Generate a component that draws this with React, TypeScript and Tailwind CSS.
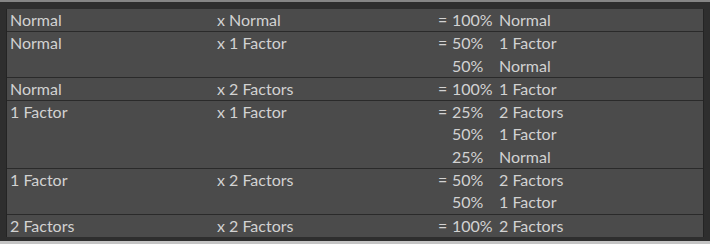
type Line = { eq?: boolean; pct: string; res: string };

type Row = { a: string; b: string; lines: Line[] };

const rows: Row[] = [
  { a: "Normal", b: "x Normal", lines: [{ eq: true, pct: "100%", res: "Normal" }] },
  {
    a: "Normal",
    b: "x 1 Factor",
    lines: [
      { eq: true, pct: "50%", res: "1 Factor" },
      { pct: "50%", res: "Normal" },
    ],
  },
  { a: "Normal", b: "x 2 Factors", lines: [{ eq: true, pct: "100%", res: "1 Factor" }] },
  {
    a: "1 Factor",
    b: "x 1 Factor",
    lines: [
      { eq: true, pct: "25%", res: "2 Factors" },
      { pct: "50%", res: "1 Factor" },
      { pct: "25%", res: "Normal" },
    ],
  },
  {
    a: "1 Factor",
    b: "x 2 Factors",
    lines: [
      { eq: true, pct: "50%", res: "2 Factors" },
      { pct: "50%", res: "1 Factor" },
    ],
  },
  { a: "2 Factors", b: "x 2 Factors", lines: [{ eq: true, pct: "100%", res: "2 Factors" }] },
];

export default function App() {
  return (
    <div className="w-[710px] h-[244px] bg-[#2e2e2e] border-t-2 border-b-[3px] border-t-[#858585] border-b-[#c4c4c4] px-[6px] pt-[7px] font-['Lato',sans-serif] text-[16px] text-[#d2d2d2]">
      <div className="bg-[#4b4b4b] border-x border-[#242424]">
        {rows.map((row, i) => (
          <div
            key={i}
            className={`flex leading-[22.3px] ${i > 0 ? "border-t border-[#2a2a2a]" : ""}`}
          >
            <div className="w-[207px] pl-[3px]">{row.a}</div>
            <div className="w-[224px] pl-[3px]">{row.b}</div>
            <div className="flex flex-col">
              {row.lines.map((l, j) => (
                <div key={j} className="flex">
                  <span className="w-[14px]">{l.eq ? "=" : ""}</span>
                  <span className="w-[47px]">{l.pct}</span>
                  <span>{l.res}</span>
                </div>
              ))}
            </div>
          </div>
        ))}
      </div>
    </div>
  );
}
